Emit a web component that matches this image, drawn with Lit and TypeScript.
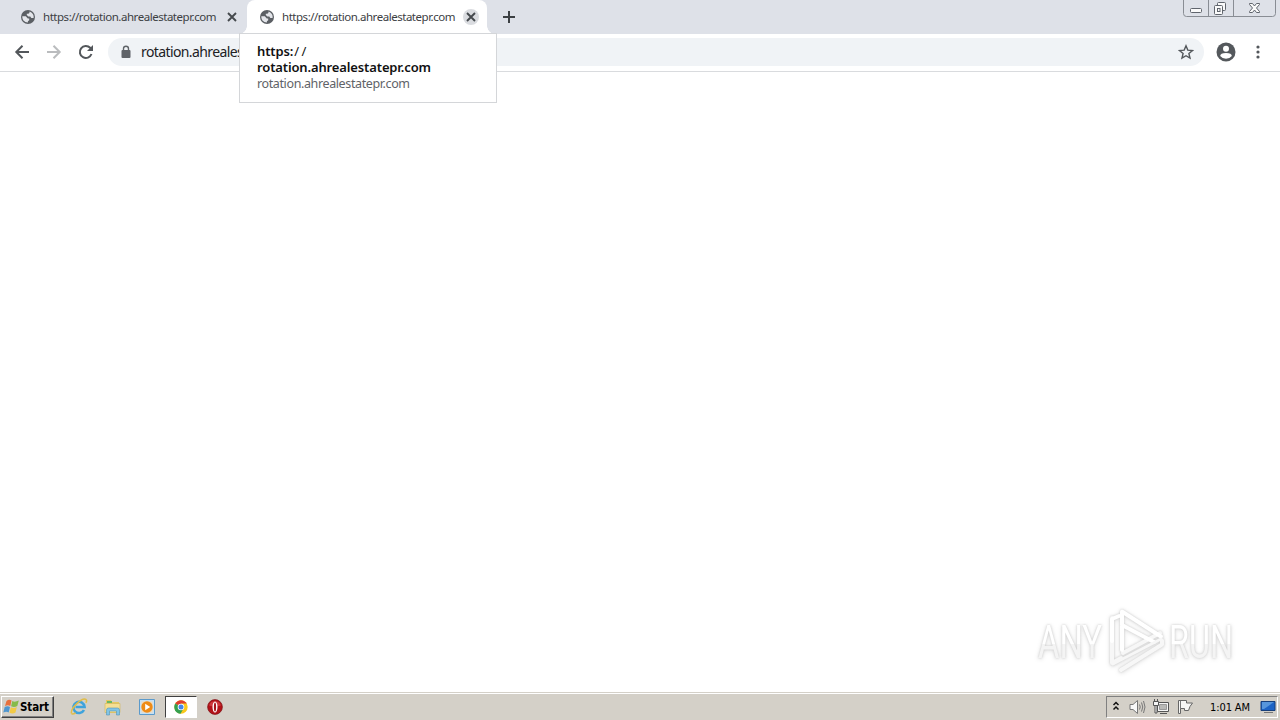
import { css, html, LitElement } from "lit";
import { customElement, property } from "lit/decorators.js";
import { classMap } from "lit/directives/class-map.js";

const closeIcon = html`<svg width="16" height="16" viewBox="0 0 16 16">
  <path d="M4 4l8 8M12 4l-8 8" stroke="#45494d" stroke-width="1.9" fill="none" />
</svg>`;

const globeIcon = html`<svg width="14" height="14" viewBox="0 0 14 14">
  <circle cx="7" cy="7" r="7" fill="#5b5f64" />
  <path d="M1.3 6.2l3.500 0 2 2.200h1.400v1.800l-1.300 1v1.300C3.200 12.200 1.200 9.800 1.300 6.200zM8.500 1.600v.7c0 .8-.6 1.400-1.400 1.400H5.800V5l1.500 1.500h2l1 1.500h2.300c.5-3-1.300-5.500-4.100-6.400z" fill="#e3e5ea" />
</svg>`;

@customElement("browser-tab")
class BrowserTabElement extends LitElement {
  @property() label = "";
  @property({ type: Boolean, reflect: true }) active = false;

  render() {
    return html`<div class=${classMap({ tab: true, active: this.active })}>
      ${globeIcon}
      <span class="label">${this.label}</span>
      <span class="close">${closeIcon}</span>
    </div>`;
  }

  static styles = css`
    :host {
      display: block;
      height: 34px;
    }
    svg {
      display: block;
    }
    .tab {
      box-sizing: border-box;
      display: flex;
      align-items: center;
      width: 240px;
      height: 34px;
      padding: 0 8px 0 13px;
      position: relative;
    }
    .active {
      background: #fff;
      border-radius: 8px 8px 0 0;
    }
    .active::before,
    .active::after {
      content: "";
      position: absolute;
      bottom: 0;
      width: 8px;
      height: 8px;
    }
    .active::before {
      left: -8px;
      background: radial-gradient(circle at 0 0, transparent 7.5px, #fff 8px);
    }
    .active::after {
      right: -8px;
      background: radial-gradient(circle at 100% 0, transparent 7.5px, #fff 8px);
    }
    .label {
      flex: 1;
      margin-left: 8px;
      font: 11.5px/16px "Noto Sans", sans-serif;
      letter-spacing: -0.47px;
      color: #3c4043;
      white-space: nowrap;
    }
    .close {
      border-radius: 50%;
    }
    .active .close {
      background: #dadce0;
    }
  `;
}

const chromeLogo = html`<svg width="14" height="14" viewBox="0 0 14 14">
  <circle cx="7" cy="7" r="6.7" fill="#f9c81b" />
  <path d="M7 7L1.2 3.600A6.700 6.700 0 0 1 12.800 3.600H7z" fill="#df3d2f" />
  <path d="M7 7L1.200 3.600A6.700 6.700 0 0 0 6.500 13.700L9.500 8.500z" fill="#35a050" />
  <circle cx="7" cy="7" r="3.300" fill="#fff" />
  <circle cx="7" cy="7" r="2.500" fill="#4385e8" />
</svg>`;

const ieLogo = html`<svg width="18" height="18" viewBox="0 0 18 18">
  <path d="M14 12a5.600 5.600 0 1 1 .6-3H5.500" fill="none" stroke="#3fa3dc" stroke-width="2.600" />
  <path d="M1.600 15.500C-.2 11 12-1 16 1.500c1 .8.500 2.200-.2 3.200" fill="none" stroke="#e0bd48" stroke-width="1.500" />
  <path d="M1.600 15.500c.8 1.200 2.700.2 4-.5" fill="none" stroke="#e0bd48" stroke-width="1.500" />
</svg>`;

const folderLogo = html`<svg width="18" height="18" viewBox="0 0 18 18">
  <path d="M2 2h5l1 2h7v11H2z" fill="#e5c960" />
  <path d="M3 3h5v2H3z" fill="#6ab663" />
  <path d="M1 5.500h15v9H1z" fill="#f5df94" stroke="#d2b55a" stroke-width=".6" />
  <path d="M2.500 17v-5q0-2 2-2h9q2 0 2 2v5h-3v-4h-7v4z" fill="#81c4e6" stroke="#5296b8" stroke-width=".6" />
</svg>`;

const mediaLogo = html`<svg width="18" height="18" viewBox="0 0 18 18">
  <path d="M1.500 1.500h15v15h-15z" fill="#c5e0f3" stroke="#5b9acb" />
  <path d="M3.500 3.500h11v11h-11z" fill="#f4d9b4" />
  <circle cx="9" cy="9" r="5.700" fill="#ee8b16" />
  <path d="M7.200 5.800L12.200 9l-5 3.200z" fill="#fff" />
</svg>`;

const operaLogo = html`<svg width="16" height="16" viewBox="0 0 16 16">
  <circle cx="8" cy="8" r="7.400" fill="#b31218" stroke="#7c1115" stroke-width=".7" />
  <path d="M2 6.500a6.200 5.800 0 0 1 12 0q-6 2-12 0z" fill="#e05455" opacity=".6" />
  <ellipse cx="8" cy="8" rx="2.500" ry="5.600" fill="#fff" />
  <ellipse cx="8" cy="8" rx="1.100" ry="4.500" fill="#a51217" />
</svg>`;

const startLogo = html`<svg width="17" height="16" viewBox="0 0 17 16">
  <path d="M3.500 2q2.500-2 5-.5L7.300 7Q5 5.500 2 7z" fill="#e8703c" />
  <path d="M9.300 2q2.500 1.500 6.500-.5L14.300 7q-3 1.800-6.200.3z" fill="#86bb4a" />
  <path d="M1.700 8q2.800-1.500 5.300 0l-1.300 5.500Q3.500 12 .3 13.500z" fill="#4f96cf" />
  <path d="M7.800 8.300q3 1.500 6-.2l-1.300 5.500q-3 1.800-6 .2z" fill="#f2ca45" />
</svg>`;

const anyRun = html`<svg class="watermark" width="240" height="80" viewBox="0 0 240 80">
  <defs>
    <linearGradient id="fade" x1="0" y1="0" x2="0" y2="1">
      <stop offset="54%" stop-color="#fff" />
      <stop offset="54%" stop-color="#f4f4f4" />
    </linearGradient>
  </defs>
  <text x="8" y="60" fill="url(#fade)" textLength="64" lengthAdjust="spacingAndGlyphs">ANY</text>
  <text x="139" y="60" fill="url(#fade)" textLength="64" lengthAdjust="spacingAndGlyphs">RUN</text>
  <g fill="none" stroke-linecap="round" stroke-linejoin="round">
    <path d="M82 20v45l9-5M93 55l37-20M91 72l41-25.500v-4" stroke="#f7f7f7" stroke-width="4" />
    <path d="M89 18l-7 3v22M92 52V13.500l39 25M92 27l32 17" stroke="#fff" stroke-width="4" />
    <path d="M83 66l48-25" stroke="#f7f7f7" stroke-width="3" />
  </g>
</svg>`;

@customElement("app-root")
class AppRootElement extends LitElement {
  render() {
    return html`
      <div class="tabs">
        <browser-tab label="https://rotation.ahrealestatepr.com"></browser-tab>
        <browser-tab active label="https://rotation.ahrealestatepr.com"></browser-tab>
        <svg class="plus" width="14" height="14" viewBox="0 0 14 14">
          <path d="M7 1v12M1 7h12" stroke="#3c4043" stroke-width="2" />
        </svg>
        <div class="window">
          <svg width="94" height="17" viewBox="0 0 94 17">
            <path d="M.5 0v13.500q0 3 3 3h86q3 0 3-3V0M25.500 0v16M50.500 0v16" fill="none" stroke="#898d94" />
            <g fill="#fafafa" stroke="#60656d">
              <rect x="7.500" y="8.500" width="11" height="4" rx="1" />
              <rect x="34.500" y="2.500" width="8" height="8" rx="1" />
              <rect x="31.500" y="5.500" width="8" height="9" rx="1" />
              <rect x="34.500" y="8.500" width="2.500" height="3" />
              <path d="M66.500 3.500h3l2 2.500 2-2.500h3v1L73.500 8l3 3.500v1h-3l-2-2.500-2 2.500h-3v-1l3-3.500-3-3.500z" />
            </g>
          </svg>
        </div>
      </div>
      <div class="toolbar">
        <svg width="16" height="16" viewBox="0 0 16 16">
          <path d="M15 8H2.500M8.500 1.800L2.300 8l6.200 6.200" fill="none" stroke="#53575b" stroke-width="2" />
        </svg>
        <svg width="16" height="16" viewBox="0 0 16 16">
          <path d="M1 8h12.500M7.500 1.800L13.700 8l-6.200 6.200" fill="none" stroke="#babcbe" stroke-width="2" />
        </svg>
        <svg width="16" height="16" viewBox="0 0 16 16">
          <path d="M13.500 10A6 6 0 1 1 12.200 3.800L13.500 5.200" fill="none" stroke="#53575b" stroke-width="2" />
          <path d="M15 1v6H9z" fill="#53575b" />
        </svg>
        <div class="address">
          <svg width="12" height="14" viewBox="0 0 12 14">
            <path d="M3.500 6V3.800a2.500 2.500 0 0 1 5 0V6" fill="none" stroke="#5f6368" stroke-width="1.400" />
            <rect x="1.500" y="5" width="9" height="8" rx="1" fill="#5f6368" />
          </svg>
          <span class="url">rotation.ahrealestatepr.com</span>
          <svg width="16" height="16" viewBox="0 0 16 16">
            <path d="M8 1.800l1.800 4.300 4.700.4-3.600 3 1.100 4.600L8 11.700l-4 2.400 1.100-4.600-3.600-3 4.700-.4z" fill="none" stroke="#53575b" stroke-width="1.400" />
          </svg>
        </div>
        <svg class="profile" width="20" height="20" viewBox="0 0 20 20">
          <circle cx="10" cy="10" r="9.500" fill="#54585c" />
          <circle cx="10" cy="6.800" r="3" fill="#fff" />
          <path d="M4.200 14q0-3 5.800-3t5.800 3q-2.200 2.800-5.800 2.800T4.200 14z" fill="#fff" />
        </svg>
        <svg class="dots" width="4" height="16" viewBox="0 0 4 16">
          <g fill="#53575b">
            <circle cx="2" cy="3" r="1.600" />
            <circle cx="2" cy="8" r="1.600" />
            <circle cx="2" cy="13" r="1.600" />
          </g>
        </svg>
      </div>
      <div class="tooltip">
        <div class="title">https:<span class="slashes">//</span><br />rotation.ahrealestatepr.com</div>
        <div class="domain">rotation.ahrealestatepr.com</div>
      </div>
      <div class="page">${anyRun}</div>
      <div class="taskbar">
        <div class="start">${startLogo}<span>Start</span></div>
        <div class="task first">${ieLogo}</div>
        <div class="task">${folderLogo}</div>
        <div class="task">${mediaLogo}</div>
        <div class="task pressed">${chromeLogo}</div>
        <div class="task">${operaLogo}</div>
        <div class="tray">
          <svg class="chevrons" width="8" height="10" viewBox="0 0 8 10">
            <path d="M1.500 4L4 1.500 6.500 4M1.500 8.500L4 6l2.500 2.500" fill="none" stroke="#111" stroke-width="1.500" />
          </svg>
          <svg class="sound" width="17" height="16" viewBox="0 0 17 16">
            <path d="M1 5.500h3L8.500 1.500v13L4 10.500H1z" fill="#f8f8f8" stroke="#777" />
            <path d="M10.500 5.500q1.500 2.500 0 5M12.500 3.500q2.500 4.500 0 9M14.500 2q3 6 0 12" fill="none" stroke="#777" />
          </svg>
          <svg class="network" width="17" height="16" viewBox="0 0 17 16">
            <path d="M4.500 3.500h11v9h-11zM7 14.500h7" fill="#f5f5f5" stroke="#555" />
            <path d="M6.500 5.500h7v5h-7z" fill="#b9b9b7" stroke="#999" />
            <path d="M.5 2.500h5v4h-5zM1.500 0v3M4.500 0v3M2 6.500h2v7.500H2z" fill="#f5f5f5" stroke="#555" />
          </svg>
          <svg class="flag" width="17" height="16" viewBox="0 0 17 16">
            <path d="M1.500 1.500v13h2V9.500h4v2h4l1.500-4 2.500-3.500H9.500V1.500z" fill="#f6f6f5" stroke="#666" />
            <path d="M3.500 2v8" stroke="#777" />
          </svg>
          <span class="clock">1:01 AM</span>
          <svg width="16" height="14" viewBox="0 0 16 14">
            <path d="M1 1.500h14v9H1z" fill="#1d63c5" stroke="#173f7b" />
            <path d="M2 2h12L4 9H2z" fill="#5796dc" />
            <path d="M4 12.500h9" stroke="#777" />
          </svg>
        </div>
      </div>
    `;
  }

  static styles = css`
    :host {
      display: flex;
      flex-direction: column;
      width: 1280px;
      height: 720px;
      overflow: hidden;
      position: relative;
      background: #fff;
      font-family: "Noto Sans", sans-serif;
    }
    svg {
      display: block;
      flex: none;
    }
    .tabs {
      display: flex;
      height: 34px;
      padding-left: 8px;
      background: #dee1e8;
    }
    browser-tab:first-child {
      width: 239px;
    }
    .plus {
      margin: 10px 0 0 15px;
    }
    .window {
      margin: 0 3px 0 auto;
    }
    .toolbar {
      box-sizing: border-box;
      display: flex;
      align-items: center;
      height: 38px;
      gap: 16px;
      padding: 0 19px 1px 14px;
      border-bottom: 1px solid #d9dbde;
    }
    .address {
      box-sizing: border-box;
      display: flex;
      align-items: center;
      width: 1096px;
      height: 28px;
      margin-left: -2px;
      padding: 0 10px 0 12px;
      border-radius: 14px;
      background: #f0f3f6;
    }
    .url {
      flex: 1;
      margin-left: 9px;
      padding-bottom: 2px;
      font-size: 14px;
      letter-spacing: -0.6px;
      color: #202124;
    }
    .profile {
      margin-left: -4px;
    }
    .dots {
      margin-left: 4px;
    }
    .tooltip {
      box-sizing: border-box;
      position: absolute;
      top: 33px;
      left: 239px;
      width: 258px;
      height: 70px;
      padding: 9px 17px;
      background: #fff;
      border: 1px solid #d4d6d9;
      line-height: 16px;
      white-space: nowrap;
    }
    .title {
      font-size: 13px;
      font-weight: 600;
      letter-spacing: -0.13px;
      color: #111;
    }
    .slashes {
      margin-left: 1px;
      font-weight: 400;
      letter-spacing: 2.5px;
    }
    .domain {
      padding-top: 1px;
      font-size: 12.5px;
      letter-spacing: -0.38px;
      color: #5f6368;
    }
    .page {
      display: flex;
      flex: 1;
      align-items: flex-end;
      justify-content: flex-end;
      padding: 0 10px 14px 0;
    }
    .watermark {
      filter: drop-shadow(0 0 1px #ccc) drop-shadow(0 1px 2px #e4e4e4);
    }
    .watermark text {
      font: 400 46px Roboto, sans-serif;
    }
    .taskbar {
      box-sizing: border-box;
      display: flex;
      align-items: center;
      height: 28px;
      padding: 1px 2px 0 1px;
      background: #d4d0c8;
      border-top: 1px solid #d4d0c8;
      box-shadow: inset 0 1px #fff;
    }
    .start {
      box-sizing: border-box;
      display: flex;
      align-items: center;
      width: 53px;
      height: 22px;
      margin-right: 1px;
      padding-left: 1px;
      border: 1px solid;
      border-color: #fff #404040 #404040 #fff;
      box-shadow: inset -1px -1px #808080;
      font: bold 11.5px "DejaVu Sans Condensed", "DejaVu Sans", sans-serif;
      letter-spacing: -0.1px;
      color: #000;
    }
    .task {
      box-sizing: border-box;
      display: flex;
      align-items: center;
      justify-content: center;
      width: 32px;
      height: 22px;
      margin-right: 2px;
    }
    .first {
      margin-left: 8px;
    }
    .pressed {
      background: #fff;
      border: 1px solid;
      border-color: #404040 #fff #fff #404040;
    }
    .tray {
      box-sizing: border-box;
      display: flex;
      align-items: center;
      width: 172px;
      height: 22px;
      margin-left: auto;
      padding: 0 1px 0 5px;
      border: 1px solid;
      border-color: #808080 #fff #fff #808080;
    }
    .chevrons {
      margin-top: -3px;
    }
    .sound {
      margin-left: 9px;
    }
    .network {
      margin-left: 7px;
    }
    .flag {
      margin-left: 7px;
    }
    .clock {
      flex: 1;
      margin-left: 16px;
      font: 11px "DejaVu Sans Condensed", "DejaVu Sans", sans-serif;
      letter-spacing: -0.1px;
      color: #000;
      white-space: nowrap;
    }
  `;
}
